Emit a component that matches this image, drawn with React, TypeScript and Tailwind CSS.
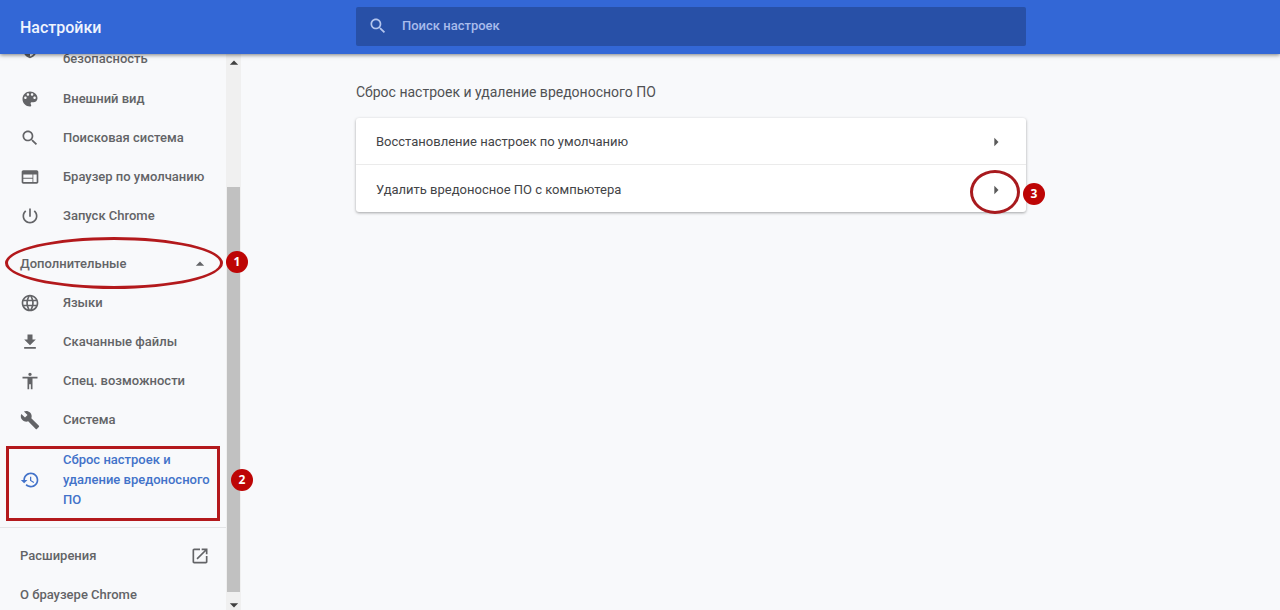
import type { ReactNode } from 'react';

const icons = {
  shield:
    'M12 1L3 5v6c0 5.55 3.84 10.74 9 12 5.16-1.26 9-6.45 9-12V5l-9-4zm0 10.990h7c-.53 4.120-3.280 7.790-7 8.940V12H5V6.300l7-3.110v8.800z',
  palette:
    'M12 3c-4.97 0-9 4.03-9 9s4.03 9 9 9c.83 0 1.5-.67 1.5-1.5 0-.39-.15-.74-.39-1.01-.23-.26-.38-.61-.38-.99 0-.83.67-1.5 1.5-1.5H16c2.76 0 5-2.24 5-5 0-4.42-4.03-8-9-8zm-5.5 9c-.83 0-1.5-.67-1.5-1.5S5.670 9 6.500 9 8 9.670 8 10.500 7.330 12 6.500 12zm3-4C8.670 8 8 7.330 8 6.500S8.670 5 9.500 5s1.500.67 1.500 1.500S10.330 8 9.500 8zm5 0c-.83 0-1.500-.67-1.500-1.500S13.670 5 14.500 5s1.500.67 1.500 1.500S15.330 8 14.500 8zm3 4c-.83 0-1.500-.67-1.500-1.500S16.670 9 17.500 9s1.500.67 1.500 1.500-.67 1.500-1.500 1.500z',
  search:
    'M15.5 14h-.79l-.28-.27C15.41 12.59 16 11.11 16 9.5 16 5.91 13.09 3 9.5 3S3 5.91 3 9.5 5.91 16 9.5 16c1.61 0 3.09-.59 4.23-1.57l.27.28v.79l5 4.99L20.49 19l-4.99-5zm-6 0C7.01 14 5 11.99 5 9.5S7.01 5 9.5 5 14 7.01 14 9.5 11.99 14 9.5 14z',
  web: 'M20 4H4c-1.1 0-1.99.9-1.99 2L2 18c0 1.1.9 2 2 2h16c1.1 0 2-.9 2-2V6c0-1.1-.9-2-2-2zm-5 14H4v-4h11v4zm0-5H4V9h11v4zm5 5h-4V9h4v9z',
  power:
    'M13 3h-2v10h2V3zm4.83 2.17l-1.42 1.42C17.99 7.86 19 9.81 19 12c0 3.87-3.13 7-7 7s-7-3.13-7-7c0-2.19 1.01-4.14 2.58-5.42L6.17 5.17C4.23 6.82 3 9.26 3 12c0 4.97 4.03 9 9 9s9-4.03 9-9c0-2.74-1.23-5.18-3.17-6.83z',
  globe:
    'M11.99 2C6.47 2 2 6.48 2 12s4.47 10 9.99 10C17.52 22 22 17.52 22 12S17.52 2 11.99 2zm6.93 6h-2.95c-.32-1.25-.78-2.45-1.38-3.56 1.84.63 3.37 1.91 4.33 3.56zM12 4.04c.83 1.2 1.48 2.53 1.91 3.96h-3.82c.43-1.43 1.08-2.76 1.91-3.96zM4.26 14C4.1 13.36 4 12.69 4 12s.1-1.36.26-2h3.38c-.08.66-.14 1.32-.14 2 0 .68.06 1.34.14 2H4.26zm.82 2h2.95c.32 1.25.78 2.45 1.38 3.56-1.84-.63-3.37-1.9-4.33-3.56zm2.95-8H5.08c.96-1.66 2.49-2.93 4.33-3.56C8.81 5.55 8.35 6.75 8.03 8zM12 19.96c-.83-1.2-1.48-2.53-1.91-3.96h3.82c-.43 1.43-1.08 2.76-1.91 3.96zM14.34 14H9.66c-.09-.66-.16-1.32-.16-2 0-.68.07-1.35.16-2h4.68c.09.65.16 1.32.16 2 0 .68-.07 1.34-.16 2zm.25 5.56c.6-1.11 1.06-2.31 1.38-3.56h2.95c-.96 1.65-2.49 2.93-4.33 3.56zM16.36 14c.08-.66.14-1.32.14-2 0-.68-.06-1.34-.14-2h3.38c.16.64.26 1.31.26 2s-.1 1.36-.26 2h-3.38z',
  download: 'M19 9h-4V3H9v6H5l7 7 7-7zM5 18v2h14v-2H5z',
  accessibility:
    'M12 2c1.1 0 2 .9 2 2s-.9 2-2 2-2-.9-2-2 .9-2 2-2zm9 7h-6v13h-2v-6h-2v6H9V9H3V7h18v2z',
  wrench:
    'M22.7 19l-9.1-9.1c.9-2.3.4-5-1.500-6.900-2-2-5-2.400-7.400-1.300L9 6 6 9 1.600 4.700C.4 7.100.9 10.100 2.900 12.100c1.900 1.900 4.600 2.400 6.900 1.500l9.100 9.100c.4.4 1 .4 1.400 0l2.300-2.300c.5-.4.5-1.100.1-1.400z',
  restore:
    'M13 3c-4.97 0-9 4.03-9 9H1l3.89 3.89.07.14L9 12H6c0-3.87 3.13-7 7-7s7 3.13 7 7-3.13 7-7 7c-1.93 0-3.68-.79-4.94-2.06l-1.42 1.42C8.27 19.99 10.51 21 13 21c4.97 0 9-4.03 9-9s-4.03-9-9-9zm-1 5v5l4.28 2.54.72-1.21-3.5-2.08V8H12z',
  openInNew:
    'M19 19H5V5h7V3H5c-1.11 0-2 .9-2 2v14c0 1.1.89 2 2 2h14c1.1 0 2-.9 2-2v-7h-2v7zM14 3v2h3.59l-9.83 9.83 1.41 1.41L19 6.410V10h2V3h-7z',
  up: 'M7 14l5-5 5 5z',
  down: 'M7 10l5 5 5-5z',
  right: 'M10 17l5-5-5-5z',
};

type IconName = keyof typeof icons;

function Icon({ name, className = 'size-5' }: { name: IconName; className?: string }) {
  return (
    <svg viewBox="0 0 24 24" fill="currentColor" aria-hidden="true" className={`shrink-0 ${className}`}>
      <path d={icons[name]} />
    </svg>
  );
}

function NavItem({ icon, label }: { icon: IconName; label: string }) {
  return (
    <a href="#" className="flex h-[39px] shrink-0 items-center gap-[23px] pl-5">
      <Icon name={icon} />
      <span>{label}</span>
    </a>
  );
}

function Scrollbar() {
  return (
    <div aria-hidden="true" className="flex w-[15px] shrink-0 flex-col items-center bg-[#f0f0f0] text-[#404040]">
      <div className="flex h-[18px] items-center">
        <Icon name="up" className="size-5" />
      </div>
      <div className="grow-[115]" />
      <div className="w-[13px] grow-[405] bg-[#c1c1c1]" />
      <div className="flex h-[18px] items-center pt-2">
        <Icon name="down" className="size-5" />
      </div>
    </div>
  );
}

function SettingRow({ children }: { children: ReactNode }) {
  return (
    <button type="button" className="flex h-[47px] w-full items-center justify-between pt-0.5 pr-5 pl-5 text-left">
      <span>{children}</span>
      <Icon name="right" className="size-5 text-[#5a5a5a]" />
    </button>
  );
}

function Badge({ children, className }: { children: ReactNode; className: string }) {
  return (
    <span
      className={`absolute flex size-[22px] items-center justify-center rounded-full bg-[#bd0505] font-['Open_Sans',sans-serif] text-xs font-bold text-white ${className}`}
    >
      {children}
    </span>
  );
}

export default function App() {
  return (
    <div className="relative flex h-screen flex-col overflow-hidden bg-[#f8f9fb] font-['Roboto',sans-serif] text-[13px] leading-5 text-[#636467]">
      <header className="z-10 flex h-[54px] shrink-0 items-center bg-[#3367d6] pb-0.5 shadow-[0_1px_4px_rgba(0,0,0,0.5)]">
        <h1 className="w-[356px] shrink-0 pt-1 pl-5 text-base font-medium text-[#f0f4fd]">Настройки</h1>
        <label className="flex h-[39px] w-full max-w-[670px] items-center gap-3.5 rounded-xs bg-[#2850a7] pl-3 text-[#b4c5ee]">
          <Icon name="search" />
          <input
            type="text"
            aria-label="Поиск настроек"
            placeholder="Поиск настроек"
            className="min-w-0 flex-1 bg-transparent font-medium outline-none placeholder:text-[#a9bcec]"
          />
        </label>
      </header>

      <div className="flex min-h-0 flex-1">
        <nav className="flex w-[226px] shrink-0 flex-col overflow-hidden font-medium">
          <a href="#" className="-mt-[35px] flex h-[60px] shrink-0 items-end gap-[23px] py-3 pl-5">
            <Icon name="shield" className="size-5 self-center" />
            <span className="leading-4">безопасность</span>
          </a>
          <NavItem icon="palette" label="Внешний вид" />
          <NavItem icon="search" label="Поисковая система" />
          <NavItem icon="web" label="Браузер по умолчанию" />
          <NavItem icon="power" label="Запуск Chrome" />
          <button type="button" className="mt-2 flex h-10 shrink-0 items-center justify-between pt-0.5 pr-4 pl-5">
            <span>Дополнительные</span>
            <Icon name="up" />
          </button>
          <NavItem icon="globe" label="Языки" />
          <NavItem icon="download" label="Скачанные файлы" />
          <NavItem icon="accessibility" label="Спец. возможности" />
          <NavItem icon="wrench" label="Система" />
          <a href="#" className="flex h-[82px] shrink-0 items-center gap-[23px] pl-5 text-[#4272c9]">
            <Icon name="restore" />
            <span>
              Сброс настроек и<br />
              удаление вредоносного
              <br />
              ПО
            </span>
          </a>
          <hr className="mt-1.5 mb-2 shrink-0 border-[#e4e5e7]" />
          <a href="#" className="flex h-[39px] shrink-0 items-center justify-between pr-4 pl-5">
            <span>Расширения</span>
            <Icon name="openInNew" />
          </a>
          <a href="#" className="flex h-[39px] shrink-0 items-center pl-5">
            О браузере Chrome
          </a>
        </nav>

        <Scrollbar />

        <main className="min-w-0 flex-1 pt-7 pl-[115px]">
          <h2 className="text-sm leading-5 text-[#505154]">Сброс настроек и удаление вредоносного ПО</h2>
          <div className="mt-4 max-w-[670px] divide-y divide-[#ebebeb] rounded-[3px] bg-white text-[#434447] shadow-[0_1px_3px_rgba(0,0,0,0.35)]">
            <SettingRow>Восстановление настроек по умолчанию</SettingRow>
            <SettingRow>Удалить вредоносное ПО с компьютера</SettingRow>
          </div>
        </main>
      </div>

      <div className="pointer-events-none absolute inset-0 z-20">
        <div className="absolute top-[237px] left-[5px] h-[52px] w-[218px] rounded-[50%] border-3 border-[#b3191c]" />
        <Badge className="top-[251px] left-[226px]">1</Badge>
        <div className="absolute top-[446px] left-[6px] h-[75px] w-[214px] border-3 border-[#b3191c]" />
        <Badge className="top-[469px] left-[231px]">2</Badge>
        <div className="absolute top-[170px] left-[970px] h-[44px] w-[50px] rounded-[50%] border-3 border-[#a81a1e]" />
        <Badge className="top-[183px] left-[1023px]">3</Badge>
      </div>
    </div>
  );
}
